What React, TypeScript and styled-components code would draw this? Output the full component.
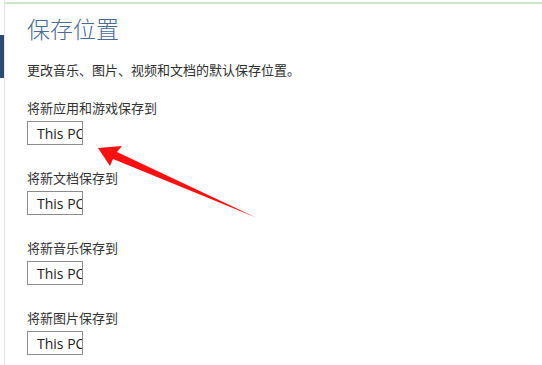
import React from "react";
import styled, { createGlobalStyle } from "styled-components";

const GlobalStyle = createGlobalStyle`
  html, body {
    margin: 0;
    padding: 0;
    background: #ffffff;
  }
  body {
    font-family: "Noto Sans CJK SC", "Noto Sans", sans-serif;
  }
`;

const Page = styled.div`
  position: relative;
  display: flex;
  width: 542px;
  height: 365px;
  overflow: hidden;
  background: #ffffff;
`;

const Rail = styled.div`
  width: 4px;
  flex: none;
  display: flex;
  flex-direction: column;
`;

const Indicator = styled.div`
  margin-top: 35px;
  height: 43px;
  background: #2e4a72;
`;

const Main = styled.div`
  flex: 1;
  border-left: 1px solid #e4e4e4;
  display: flex;
  flex-direction: column;
`;

const TopLine = styled.div`
  margin-top: 2px;
  height: 2px;
  background: #cde7c9;
`;

const Content = styled.div`
  padding: 13px 0 0 22px;
  display: flex;
  flex-direction: column;
`;

const Title = styled.h1`
  margin: 0;
  font-family: "Noto Sans CJK SC", sans-serif;
  font-weight: 300;
  font-size: 23px;
  line-height: 23px;
  color: #4a6a96;
`;

const Description = styled.p`
  margin: 23px 0 0;
  font-size: 13px;
  line-height: 13px;
  color: #2e2e2e;
`;

const Group = styled.div<{ $first?: boolean }>`
  margin-top: ${(p) => (p.$first ? "25px" : "26px")};
  display: flex;
  flex-direction: column;
  align-items: flex-start;
`;

const Label = styled.div`
  font-size: 13px;
  line-height: 13px;
  color: #333333;
`;

const SelectBox = styled.div`
  margin-top: 7px;
  box-sizing: border-box;
  width: 56px;
  height: 24px;
  border: 1px solid #8c8c8c;
  padding-left: 9px;
  display: flex;
  align-items: center;
  overflow: hidden;
  white-space: nowrap;
  font-family: "Open Sans", "Noto Sans", sans-serif;
  font-size: 14px;
  color: #222222;
`;

const ArrowLayer = styled.svg`
  position: absolute;
  left: 0;
  top: 0;
  width: 542px;
  height: 365px;
  pointer-events: none;
`;

const groups = [
  "将新应用和游戏保存到",
  "将新文档保存到",
  "将新音乐保存到",
  "将新图片保存到",
];

export default function App() {
  return (
    <>
      <GlobalStyle />
      <Page>
        <Rail>
          <Indicator />
        </Rail>
        <Main>
          <TopLine />
          <Content>
            <Title>保存位置</Title>
            <Description>更改音乐、图片、视频和文档的默认保存位置。</Description>
            {groups.map((g, i) => (
              <Group key={g} $first={i === 0}>
                <Label>{g}</Label>
                <SelectBox>This PC</SelectBox>
              </Group>
            ))}
          </Content>
        </Main>
        <ArrowLayer viewBox="0 0 542 365">
          <polygon
            points="98,148 122,146 117,152 257,218 113,159 110,166"
            fill="#ff1010"
          />
        </ArrowLayer>
      </Page>
    </>
  );
}
